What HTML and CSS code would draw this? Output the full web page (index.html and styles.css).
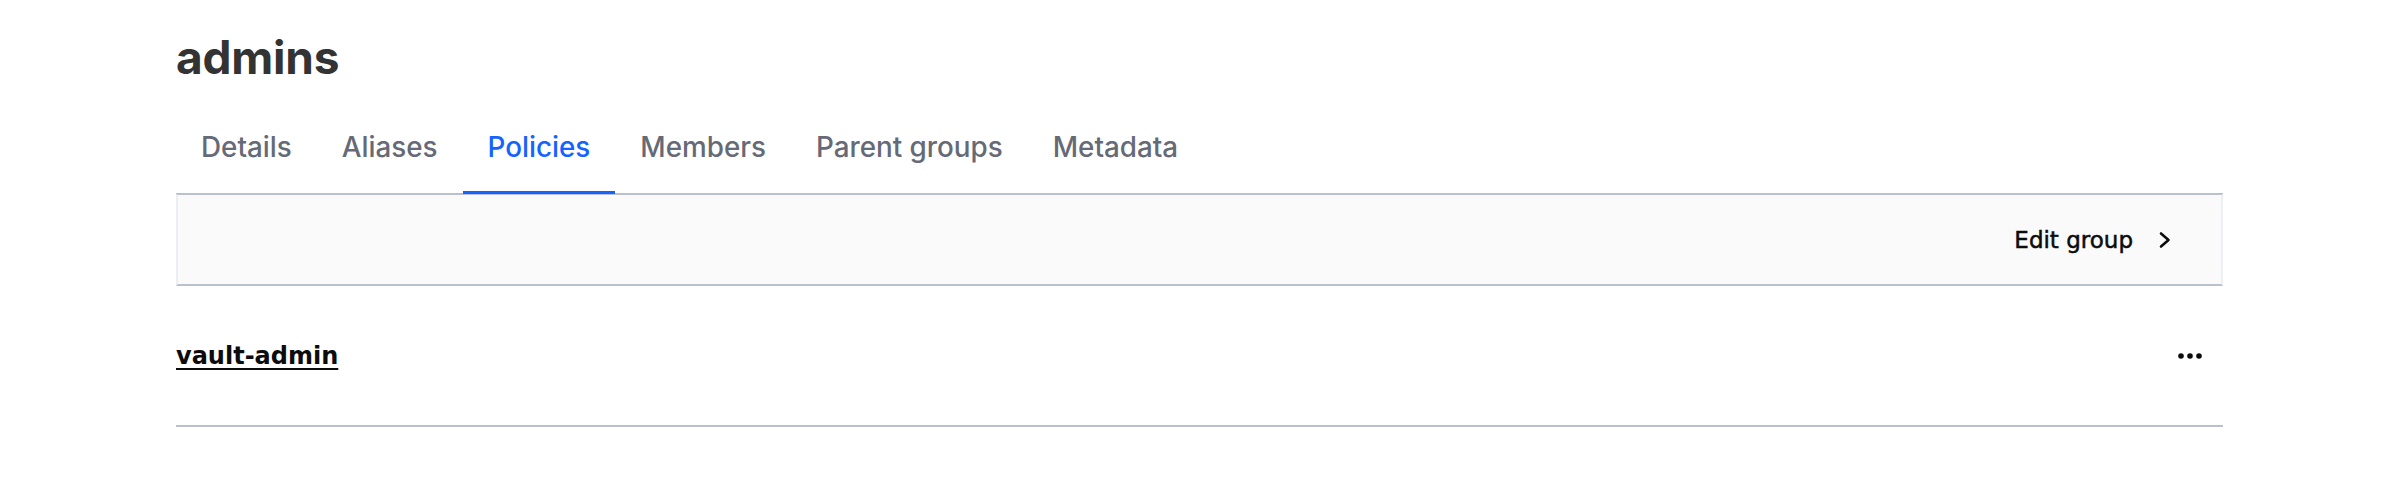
FILE: index.html
```html
<!DOCTYPE html>
<html lang="en">
<head>
<meta charset="utf-8">
<title>admins</title>
<link rel="stylesheet" href="styles.css">
</head>
<body>
<main class="page">
  <h1 class="title">admins</h1>
  <nav class="tabs">
    <a class="tab">Details</a>
    <a class="tab">Aliases</a>
    <a class="tab is-active">Policies</a>
    <a class="tab">Members</a>
    <a class="tab">Parent groups</a>
    <a class="tab">Metadata</a>
  </nav>
  <div class="toolbar">
    <a class="toolbar-link">Edit group
      <svg class="chevron" width="14" height="18" viewBox="0 0 14 18" aria-hidden="true"><polyline points="3,2.5 10.5,9 3,15.5" fill="none" stroke="#0c0c0e" stroke-width="2.6" stroke-linecap="round" stroke-linejoin="round"/></svg>
    </a>
  </div>
  <div class="list-item">
    <a class="item-link">vault-admin</a>
    <button class="more" aria-label="More">
      <svg width="24" height="8" viewBox="0 0 24 8" aria-hidden="true"><circle cx="3" cy="4" r="2.8" fill="#0c0c0e"/><circle cx="12" cy="4" r="2.8" fill="#0c0c0e"/><circle cx="21" cy="4" r="2.8" fill="#0c0c0e"/></svg>
    </button>
  </div>
</main>
</body>
</html>
```
FILE: styles.css
```css
html, body {
  margin: 0;
  padding: 0;
  background: #ffffff;
}

body {
  font-family: Inter, "Noto Sans", sans-serif;
}

.page {
  width: 2047px;
  margin-left: 176px;
}

.title {
  margin: 0;
  padding-top: 30px;
  font-size: 46px;
  line-height: 1.2;
  font-weight: 700;
  color: #333333;
  letter-spacing: -0.2px;
}

.tabs {
  display: flex;
  margin-top: 26px;
  border-bottom: 1px solid #bac1cc;
}

.tab {
  display: block;
  padding: 20px 25px 26px;
  font-size: 27.8px;
  line-height: 1.22;
  font-weight: 500;
  color: #656a76;
  margin-bottom: -1px;
  border-bottom: 3px solid transparent;
}

.tab.is-active {
  color: #1563ff;
  border-bottom-color: #1563ff;
}

.toolbar {
  display: flex;
  justify-content: flex-end;
  align-items: center;
  height: 89px;
  background: #fafafa;
  border-top: 1px solid #bac1cc;
  border-bottom: 2px solid #bac1cc;
  border-left: 2px solid #ebeef2;
  border-right: 2px solid #ebeef2;
  padding-right: 49px;
}

.toolbar-link {
  display: flex;
  align-items: center;
  gap: 25px;
  font-family: "DejaVu Sans", sans-serif;
  font-size: 23px;
  font-weight: 500;
  color: #0c0c0e;
  -webkit-text-stroke: 0.5px #0c0c0e;
}

.chevron {
  display: block;
}

.list-item {
  display: flex;
  justify-content: space-between;
  align-items: center;
  height: 139px;
  border-bottom: 2px solid #bac1cc;
}

.item-link {
  font-family: "DejaVu Sans", sans-serif;
  font-size: 24px;
  font-weight: 700;
  color: #0c0c0e;
  text-decoration: underline;
  text-decoration-thickness: 2px;
  text-underline-offset: 4px;
}

.more {
  display: block;
  background: none;
  border: 0;
  padding: 0;
  margin-right: 21px;
  line-height: 0;
}

.more svg {
  display: block;
}
```
